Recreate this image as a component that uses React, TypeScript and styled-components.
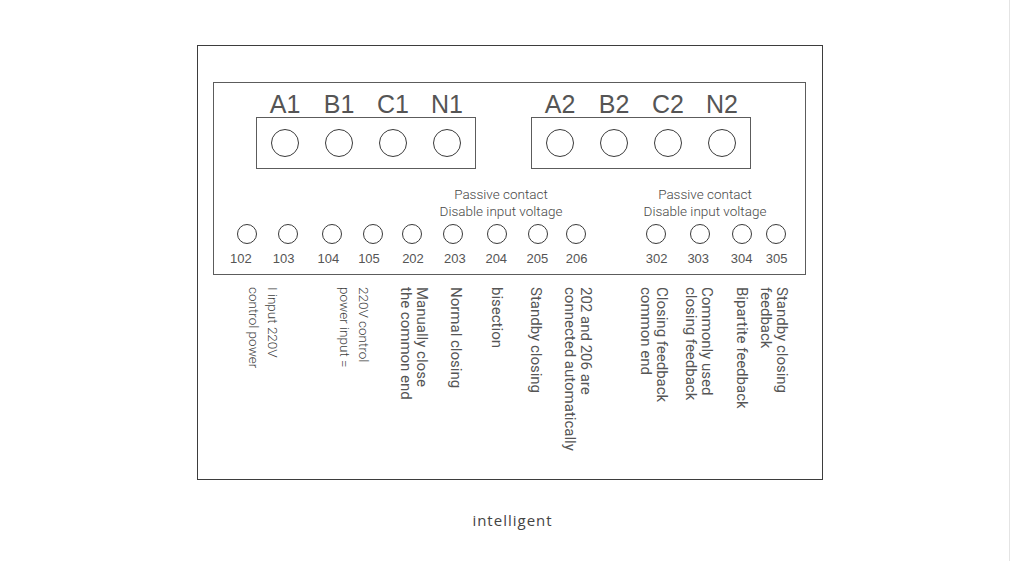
import React from "react";
import styled, { createGlobalStyle } from "styled-components";

const GlobalStyle = createGlobalStyle`
  html, body {
    margin: 0;
    padding: 0;
    background: #ffffff;
  }
  body {
    font-family: Roboto, "Liberation Sans", sans-serif;
    color: #555555;
  }
`;

// x positions below are page coordinates; these are where each flow row starts
const PANEL_CONTENT_X = 214;
const FRAME_CONTENT_X = 213;

const Page = styled.div`
  box-sizing: border-box;
  width: 1010px;
  height: 561px;
  padding: 45px 0 0 197px;
  border-right: 1px solid #e4e4e4;
  overflow: hidden;
`;

const Frame = styled.div`
  box-sizing: border-box;
  width: 626px;
  height: 435px;
  border: 1px solid #3d3d3d;
  padding: 36px 0 0 15px;
`;

const Panel = styled.div`
  box-sizing: border-box;
  width: 593px;
  height: 193px;
  border: 1px solid #5c5c5c;
  padding-top: 9px;
`;

const TerminalRow = styled.div`
  display: flex;
  gap: 55px;
  padding-left: 42px;
`;

const TerminalGroup = styled.div`
  display: flex;
  flex-direction: column;
  width: 220px;
`;

const PhaseRow = styled.div`
  display: flex;
  gap: 26px;
  padding: 0 15px;
  height: 25px;
`;

const Phase = styled.span`
  width: 28px;
  display: flex;
  justify-content: center;
  font-family: "Liberation Sans", Arial, sans-serif;
  font-size: 25px;
  line-height: 25px;
  color: #555555;
  white-space: nowrap;
`;

const TerminalBox = styled.div`
  box-sizing: border-box;
  height: 52px;
  border: 1px solid #5c5c5c;
  display: flex;
  align-items: center;
  gap: 26px;
  padding: 0 14px;
`;

const Screw = styled.span<{ $size: number }>`
  box-sizing: border-box;
  display: block;
  flex: none;
  width: ${(p) => p.$size}px;
  height: ${(p) => p.$size}px;
  border: 1px solid #3a3a3a;
  border-radius: 50%;
`;

const NoteRow = styled.div`
  display: flex;
  gap: 44px;
  margin-top: 17px;
  padding-left: 207px;
`;

const Note = styled.p`
  margin: 0;
  width: 160px;
  text-align: center;
  font-family: Roboto, sans-serif;
  font-weight: 300;
  font-size: 13.5px;
  line-height: 17px;
  color: #484848;
  white-space: nowrap;
`;

const PortRow = styled.div`
  display: flex;
  align-items: flex-start;
  margin-top: 4px;
`;

const Port = styled.div<{ $offset: number }>`
  display: flex;
  flex-direction: column;
  align-items: center;
  width: 20px;
  margin-left: ${(p) => p.$offset}px;
`;

const PortNumber = styled.span<{ $dx: number }>`
  margin-top: 7px;
  font-family: "Liberation Sans", Arial, sans-serif;
  font-size: 13px;
  line-height: 15px;
  color: #555555;
  white-space: nowrap;
  transform: translateX(${(p) => p.$dx}px);
`;

const LabelArea = styled.div`
  display: flex;
  align-items: flex-start;
  margin-top: 12px;
`;

const WireLabel = styled.div<{ $offset: number; $thin: boolean }>`
  writing-mode: vertical-rl;
  white-space: nowrap;
  margin-left: ${(p) => p.$offset}px;
  font-family: Roboto, sans-serif;
  font-weight: ${(p) => (p.$thin ? 300 : 400)};
  font-size: ${(p) => (p.$thin ? 13.5 : 15)}px;
  line-height: ${(p) => (p.$thin ? 19 : 16)}px;
  color: ${(p) => (p.$thin ? "#404040" : "#555555")};
`;

const Caption = styled.div`
  box-sizing: border-box;
  width: 626px;
  margin-top: 30px;
  padding-left: 5px;
  text-align: center;
  font-family: "Open Sans", sans-serif;
  font-size: 15px;
  line-height: 20px;
  letter-spacing: 1px;
  color: #444444;
`;

const terminals = [
  ["A1", "B1", "C1", "N1"],
  ["A2", "B2", "C2", "N2"],
];

const notes = [
  ["Passive contact", "Disable input voltage"],
  ["Passive contact", "Disable input voltage"],
];

const ports = [
  { id: "102", cx: 247.3, dx: -6.5 },
  { id: "103", cx: 288.3, dx: -4.6 },
  { id: "104", cx: 331.7, dx: -3.4 },
  { id: "105", cx: 373.3, dx: -4.3 },
  { id: "202", cx: 411.7, dx: 1.3 },
  { id: "203", cx: 453.3, dx: 1.7 },
  { id: "204", cx: 496.7, dx: -0.4 },
  { id: "205", cx: 537.7, dx: -0.2 },
  { id: "206", cx: 576.3, dx: 0.4 },
  { id: "302", cx: 656.3, dx: 0.4 },
  { id: "303", cx: 700, dx: -1.7 },
  { id: "304", cx: 741.7, dx: 0 },
  { id: "305", cx: 775.7, dx: 1 },
];

const wireLabels = [
  { lines: ["I input 220V", "control power"], left: 243.7, thin: true },
  { lines: ["220V control", "power input ="], left: 334.7, thin: true },
  { lines: ["Manually close", "the common end"], left: 398.5, thin: false },
  { lines: ["Normal closing"], left: 448.5, thin: false },
  { lines: ["bisection"], left: 489.5, thin: false },
  { lines: ["Standby closing"], left: 528.5, thin: false },
  { lines: ["202 and 206 are", "connected automatically"], left: 562.5, thin: false },
  { lines: ["Closing feedback", "common end"], left: 638.5, thin: false },
  { lines: ["Commonly used", "closing feedback"], left: 683.5, thin: false },
  { lines: ["Bipartite feedback"], left: 734.5, thin: false },
  { lines: ["Standby closing", "feedback"], left: 758.5, thin: false },
];

const portOffsets = ports.map((port, i) =>
  i === 0 ? port.cx - 10 - PANEL_CONTENT_X : port.cx - ports[i - 1].cx - 20
);

const labelOffsets = wireLabels.map((label, i) => {
  if (i === 0) return label.left - FRAME_CONTENT_X;
  const prev = wireLabels[i - 1];
  const prevRight = prev.left + prev.lines.length * (prev.thin ? 19 : 16);
  return label.left - prevRight;
});

export default function App() {
  return (
    <>
      <GlobalStyle />
      <Page>
        <Frame>
          <Panel>
            <TerminalRow>
              {terminals.map((group, g) => (
                <TerminalGroup key={g}>
                  <PhaseRow>
                    {group.map((name) => (
                      <Phase key={name}>{name}</Phase>
                    ))}
                  </PhaseRow>
                  <TerminalBox>
                    {group.map((name) => (
                      <Screw key={name} $size={28} />
                    ))}
                  </TerminalBox>
                </TerminalGroup>
              ))}
            </TerminalRow>

            <NoteRow>
              {notes.map((lines, i) => (
                <Note key={i}>
                  {lines[0]}
                  <br />
                  {lines[1]}
                </Note>
              ))}
            </NoteRow>

            <PortRow>
              {ports.map((port, i) => (
                <Port key={port.id} $offset={portOffsets[i]}>
                  <Screw $size={20} />
                  <PortNumber $dx={port.dx}>{port.id}</PortNumber>
                </Port>
              ))}
            </PortRow>
          </Panel>

          <LabelArea>
            {wireLabels.map((label, i) => (
              <WireLabel
                key={label.lines.join("-")}
                $offset={labelOffsets[i]}
                $thin={label.thin}
              >
                {label.lines.map((line, j) => (
                  <React.Fragment key={j}>
                    {j > 0 && <br />}
                    {line}
                  </React.Fragment>
                ))}
              </WireLabel>
            ))}
          </LabelArea>
        </Frame>
        <Caption>intelligent</Caption>
      </Page>
    </>
  );
}
